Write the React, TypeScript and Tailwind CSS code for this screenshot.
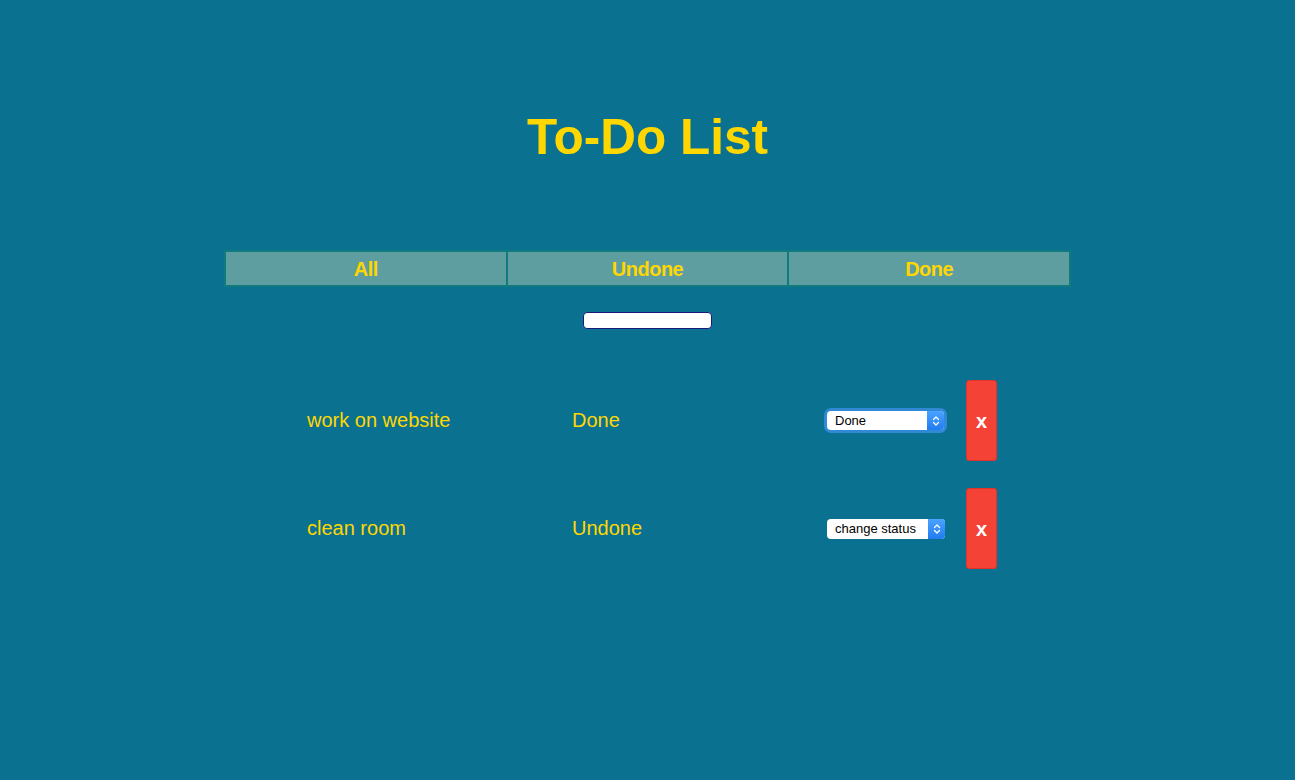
import React from 'react';

const todos = [
  { id: 1, text: 'work on website', status: 'Done', choice: 'Done', focused: true },
  { id: 2, text: 'clean room', status: 'Undone', choice: 'change status', focused: false },
];

function Chevrons() {
  return (
    <svg width="8" height="12" viewBox="0 0 8 12" fill="none">
      <path d="M1.5 4.5 L4 2 L6.5 4.5" stroke="white" strokeWidth="1.3" strokeLinecap="round" strokeLinejoin="round" />
      <path d="M1.5 7.5 L4 10 L6.5 7.5" stroke="white" strokeWidth="1.3" strokeLinecap="round" strokeLinejoin="round" />
    </svg>
  );
}

function StatusSelect({ label, focused }: { label: string; focused: boolean }) {
  return (
    <div
      className={`flex items-stretch rounded-[4px] bg-white overflow-hidden ${
        focused ? 'w-[117px] h-[19px] ring-[3px] ring-[#3b8fe6]/80' : 'w-[118px] h-[20px]'
      }`}
    >
      <span className="flex-1 flex items-center pl-[8px] text-[13px] text-black leading-none">{label}</span>
      <span className="w-[17px] flex items-center justify-center bg-gradient-to-b from-[#4aa3ff] to-[#1f7cf0]">
        <Chevrons />
      </span>
    </div>
  );
}

export default function App() {
  return (
    <div className="min-h-[780px] bg-[#0b7191] font-['Liberation_Sans',Arial,sans-serif] text-[#ffd700]">
      <h1 className="pt-[107px] text-center text-[49.5px] font-bold leading-[60px]">To-Do List</h1>

      {/* Filter tabs */}
      <div className="mt-[83px] mx-auto w-[847px] flex border border-[#0f7b7f]">
        {['All', 'Undone', 'Done'].map((tab) => (
          <button
            key={tab}
            className="flex-1 h-[35px] bg-[#5f9ea0] border border-[#0f7b7f] text-[20px] font-bold text-[#ffd700] tracking-[-0.5px]"
          >
            {tab}
          </button>
        ))}
      </div>

      {/* New todo input */}
      <div className="mt-[25px] flex justify-center">
        <input
          type="text"
          className="w-[129px] h-[17px] bg-white border border-[#1a1a7a] rounded-[4px] outline-none"
        />
      </div>

      {/* Todo rows */}
      <div className="mt-[51px] mx-auto w-[699px] pl-[9px] flex flex-col gap-[27px]">
        {todos.map((todo) => (
          <div key={todo.id} className="flex items-center h-[81px]">
            <span className="w-[265px] text-[20px] -mt-[1px]">{todo.text}</span>
            <span className="w-[255px] text-[20px] -mt-[1px]">{todo.status}</span>
            <div className="w-[139px] flex">
              <StatusSelect label={todo.choice} focused={todo.focused} />
            </div>
            <button className="w-[31px] h-[81px] rounded-[3px] bg-[#f44336] border border-[#e0332a] text-white text-[20px] font-bold">
              x
            </button>
          </div>
        ))}
      </div>
    </div>
  );
}
